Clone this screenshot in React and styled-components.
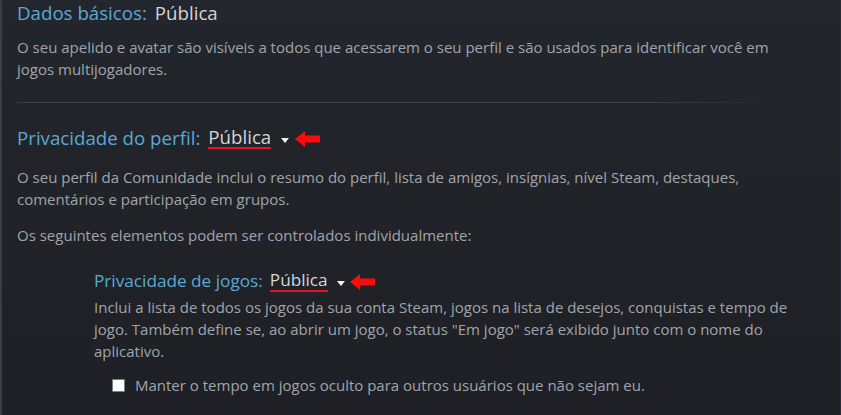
import React from 'react';
import styled, { createGlobalStyle } from 'styled-components';

const GlobalStyle = createGlobalStyle`
  html, body {
    margin: 0;
    padding: 0;
    background: #1f2126;
  }
  body {
    font-family: "Open Sans", "Liberation Sans", sans-serif;
  }
`;

const Page = styled.div`
  box-sizing: border-box;
  min-height: 415px;
  width: 841px;
  padding: 0 40px 0 15px;
  background: linear-gradient(to bottom, #23262c 0%, #1e2025 100%);
  border-left: 2px solid #3a3d43;
  border-right: 1px solid #262c36;
  overflow: hidden;
`;

const Section = styled.div`
  padding-left: ${p => (p.$indent ? '77px' : '0')};
`;

const Heading = styled.div`
  display: flex;
  align-items: center;
  gap: ${p => (p.$small ? '7px' : '8px')};
  font-size: ${p => (p.$small ? '17.2px' : '18.7px')};
  line-height: 24px;
  color: #5ba9d6;
  padding-top: ${p => p.$top || '1px'};
`;

const Value = styled.span`
  color: #d2d5d8;
  border-bottom: ${p => (p.$marked ? '2px solid #e3141c' : 'none')};
  line-height: 20px;
`;

const Caret = styled.span`
  width: 0;
  height: 0;
  border-left: 4px solid transparent;
  border-right: 4px solid transparent;
  border-top: 5px solid #f2f2f2;
  margin-left: 2px;
  margin-top: 4px;
`;

const Text = styled.p`
  margin: ${p => p.$margin || '0'};
  font-size: 15px;
  line-height: 22px;
  color: #a0a5ab;
`;

const Divider = styled.div`
  height: 1px;
  width: 755px;
  margin: 22px 0 22px;
  background: linear-gradient(to right, #3a3e45 0%, #3a3e45 85%, rgba(58, 62, 69, 0) 100%);
`;

const CheckRow = styled.label`
  display: flex;
  align-items: center;
  gap: 10px;
  margin: 13px 0 0 18px;
  font-size: 15px;
  color: #a0a5ab;
`;

const Box = styled.span`
  box-sizing: border-box;
  width: 13px;
  height: 13px;
  background: #ffffff;
  border: 1px solid #7d7d7d;
  border-radius: 1px;
`;

function RedArrow() {
  return (
    <svg width="25" height="16" viewBox="0 0 25 16" style={{ marginLeft: -2, marginTop: 2 }}>
      <path d="M0 8 L10 0 L10 4.5 L25 4.5 L25 11.5 L10 11.5 L10 16 Z" fill="#ff0a0a" />
    </svg>
  );
}

function Dropdown({ children }) {
  return (
    <>
      <Value $marked>{children}</Value>
      <Caret />
      <RedArrow />
    </>
  );
}

export default function App() {
  return (
    <Page>
      <GlobalStyle />
      <Section>
        <Heading>
          Dados básicos: <Value>Pública</Value>
        </Heading>
        <Text $margin="11px 0 0">
          O seu apelido e avatar são visíveis a todos que acessarem o seu perfil e são usados para identificar você em jogos multijogadores.
        </Text>
      </Section>
      <Divider />
      <Section>
        <Heading>
          Privacidade do perfil: <Dropdown>Pública</Dropdown>
        </Heading>
        <Text $margin="16px 0 0">
          O seu perfil da Comunidade inclui o resumo do perfil, lista de amigos, insígnias, nível Steam, destaques, comentários e participação em grupos.
        </Text>
        <Text $margin="14px 0 0">Os seguintes elementos podem ser controlados individualmente:</Text>
      </Section>
      <Section $indent>
        <Heading $small $top="23px">
          Privacidade de jogos: <Dropdown>Pública</Dropdown>
        </Heading>
        <Text $margin="3px 0 0">
          Inclui a lista de todos os jogos da sua conta Steam, jogos na lista de desejos, conquistas e tempo de jogo. Também define se, ao abrir um jogo, o status "Em jogo" será exibido junto com o nome do aplicativo.
        </Text>
        <CheckRow>
          <Box />
          Manter o tempo em jogos oculto para outros usuários que não sejam eu.
        </CheckRow>
      </Section>
    </Page>
  );
}
